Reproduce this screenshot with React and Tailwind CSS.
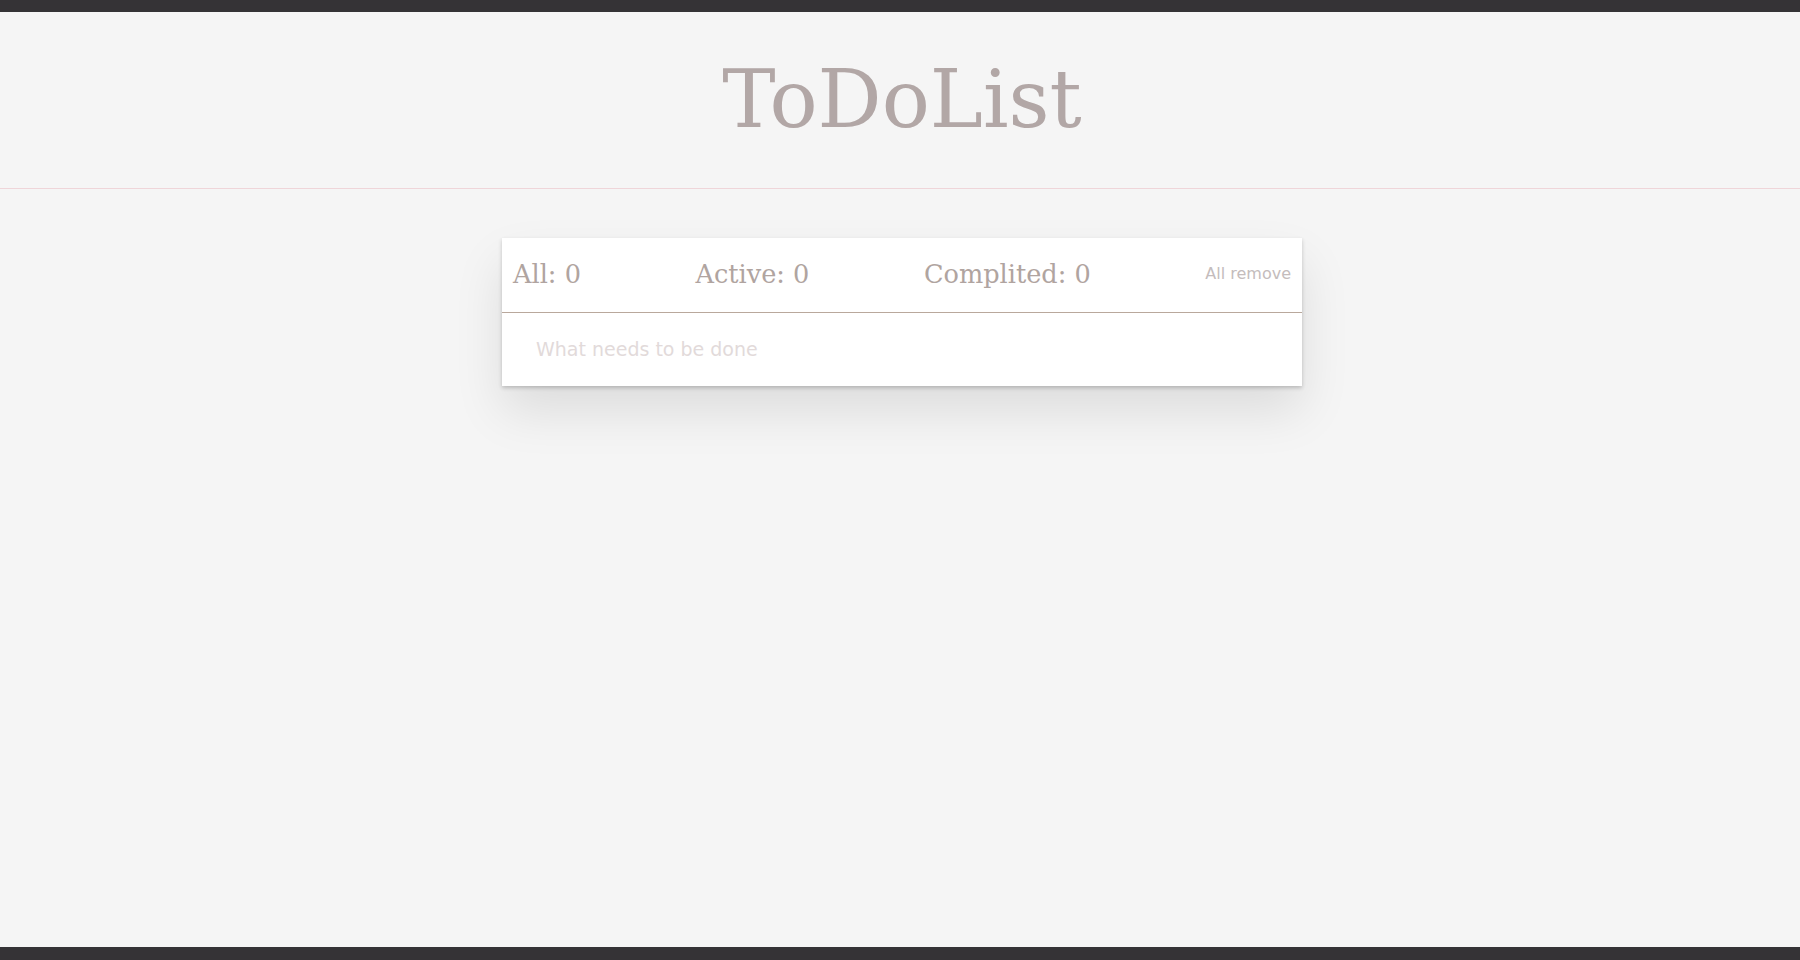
import { useState } from 'react';

const serif = { fontFamily: '"DejaVu Serif", "Liberation Serif", serif' };
const sans = { fontFamily: '"DejaVu Sans", "Liberation Sans", sans-serif' };

export default function App() {
  const [todos, setTodos] = useState([]);
  const [text, setText] = useState('');

  const active = todos.filter((t) => !t.done).length;
  const completed = todos.length - active;

  const addTodo = (e) => {
    e.preventDefault();
    if (!text.trim()) return;
    setTodos([...todos, { id: Date.now(), title: text, done: false }]);
    setText('');
  };

  return (
    <div className="h-screen flex flex-col bg-[#f5f5f5] overflow-hidden">
      <div className="h-[12px] bg-[#353336] shrink-0"></div>
      <header className="h-[177px] shrink-0 flex items-center justify-center border-b border-[#efd5d9] pl-[4px]">
        <h1 className="text-[80px] text-[#b2a7a6]" style={serif}>
          ToDoList
        </h1>
      </header>
      <main className="flex-1 pl-[4px]">
        <div className="w-[800px] mx-auto mt-[49px] bg-white shadow-[0_2px_4px_0_rgba(0,0,0,0.2),0_25px_50px_0_rgba(0,0,0,0.1)]">
          <div className="h-[75px] flex items-center justify-between px-[11px] pb-[2px] border-b border-[#b9a89c]">
            <span className="text-[25.6px] text-[#b0a4a0]" style={serif}>All: {todos.length}</span>
            <span className="text-[25.6px] text-[#b0a4a0]" style={serif}>Active: {active}</span>
            <span className="text-[25.6px] text-[#b0a4a0]" style={serif}>Complited: {completed}</span>
            <button
              onClick={() => setTodos([])}
              className="text-[16px] text-[#c4bcbc]"
              style={sans}
            >
              All remove
            </button>
          </div>
          <form onSubmit={addTodo} className="h-[73px] flex items-center">
            <input
              type="text"
              value={text}
              onChange={(e) => setText(e.target.value)}
              placeholder="What needs to be done"
              className="w-full h-full pl-[34px] pr-4 pb-[2px] text-[19px] text-[#8a7f7d] placeholder:text-[#e2dada] outline-none bg-transparent"
              style={sans}
            />
          </form>
        </div>
      </main>
      <div className="h-[13px] bg-[#353336] shrink-0"></div>
    </div>
  );
}
